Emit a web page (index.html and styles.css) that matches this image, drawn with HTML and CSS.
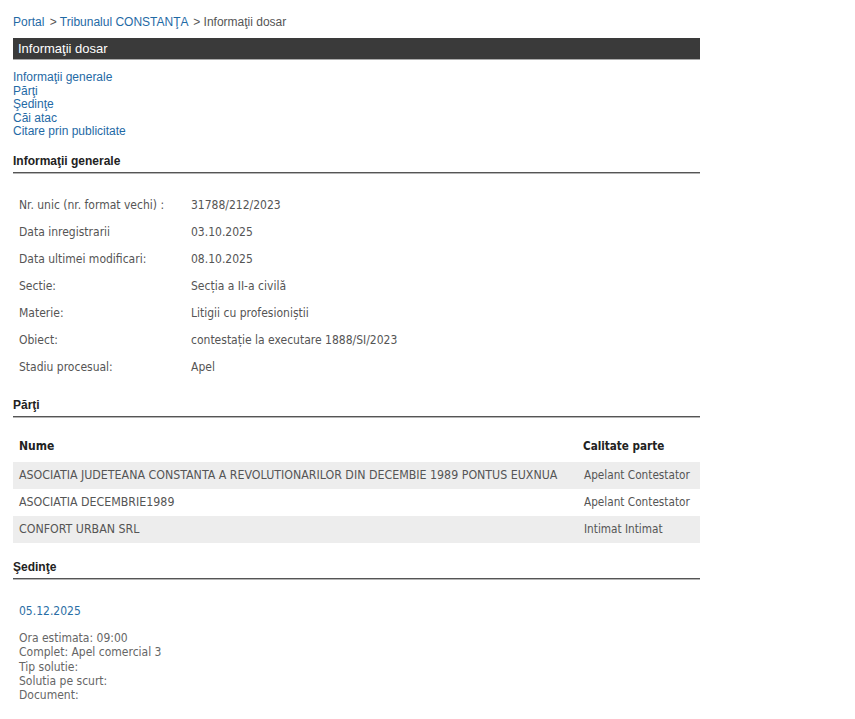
FILE: index.html
```html
<!DOCTYPE html>
<html lang="ro">
<head>
<meta charset="utf-8">
<title>Informaţii dosar</title>
<link rel="stylesheet" href="styles.css">
</head>
<body>
<div class="page">
  <div class="breadcrumb">
    <a href="#">Portal</a> <span class="sep">&gt;</span> <a href="#">Tribunalul CONSTANŢA</a> <span class="sep">&gt; Informaţii dosar</span>
  </div>
  <div class="titlebar">Informaţii dosar</div>
  <ul class="toc">
    <li><a href="#">Informaţii generale</a></li>
    <li><a href="#">Părţi</a></li>
    <li><a href="#">Şedinţe</a></li>
    <li><a href="#">Căi atac</a></li>
    <li><a href="#">Citare prin publicitate</a></li>
  </ul>

  <h2 class="section">Informaţii generale</h2>
  <div class="info">
    <div class="info-row"><span class="lbl">Nr. unic (nr. format vechi) :</span><span class="val">31788/212/2023</span></div>
    <div class="info-row"><span class="lbl">Data inregistrarii</span><span class="val">03.10.2025</span></div>
    <div class="info-row"><span class="lbl">Data ultimei modificari:</span><span class="val">08.10.2025</span></div>
    <div class="info-row"><span class="lbl">Sectie:</span><span class="val">Secția a II-a civilă</span></div>
    <div class="info-row"><span class="lbl">Materie:</span><span class="val">Litigii cu profesioniștii</span></div>
    <div class="info-row"><span class="lbl">Obiect:</span><span class="val">contestație la executare 1888/SI/2023</span></div>
    <div class="info-row"><span class="lbl">Stadiu procesual:</span><span class="val">Apel</span></div>
  </div>

  <h2 class="section">Părţi</h2>
  <table class="parti">
    <thead>
      <tr><th>Nume</th><th class="col2">Calitate parte</th></tr>
    </thead>
    <tbody>
      <tr class="odd"><td>ASOCIATIA JUDETEANA CONSTANTA A REVOLUTIONARILOR DIN DECEMBIE 1989 PONTUS EUXNUA</td><td class="col2">Apelant Contestator</td></tr>
      <tr><td>ASOCIATIA DECEMBRIE1989</td><td class="col2">Apelant Contestator</td></tr>
      <tr class="odd"><td>CONFORT URBAN SRL</td><td class="col2">Intimat Intimat</td></tr>
    </tbody>
  </table>

  <h2 class="section">Şedinţe</h2>
  <div class="sedinta">
    <div class="date">05.12.2025</div>
    <div class="details">
      <div>Ora estimata: 09:00</div>
      <div>Complet: Apel comercial 3</div>
      <div>Tip solutie:</div>
      <div>Solutia pe scurt:</div>
      <div>Document:</div>
    </div>
  </div>
</div>
</body>
</html>
```
FILE: styles.css
```css
html, body {
  margin: 0;
  padding: 0;
  background: #fff;
}
.page {
  width: 687px;
  padding: 14px 0 0 13px;
  font-family: "Liberation Sans", Arial, sans-serif;
  font-size: 12px;
  color: #555;
}
a {
  color: #1f6aa5;
  text-decoration: none;
}
.breadcrumb {
  font-size: 12px;
  line-height: 16px;
  color: #555;
}
.breadcrumb .sep {
  margin-left: 2px;
}
.titlebar {
  margin-top: 8px;
  height: 22px;
  line-height: 21px;
  background: #3a3a3a;
  border-bottom: 1px solid #aaa;
  box-sizing: border-box;
  color: #fff;
  font-size: 13px;
  padding-left: 5px;
}
.toc {
  list-style: none;
  margin: 11px 0 0;
  padding: 0;
  line-height: 13.6px;
  font-size: 12px;
}
.section {
  margin: 0;
  font-family: "Liberation Sans", Arial, sans-serif;
  font-size: 12px;
  font-weight: bold;
  color: #222;
  border-bottom: 1px solid #555;
  box-shadow: 0 1px 0 #b5b5b5;
  padding-bottom: 4px;
  line-height: 14px;
}
.toc + .section { margin-top: 15px; }
.info {
  padding: 19px 0 17px 6px;
  font-family: "DejaVu Sans Condensed", "DejaVu Sans", sans-serif;
  font-size: 12px;
  color: #555;
}
.info-row {
  display: flex;
  height: 27px;
  line-height: 27px;
}
.info-row .lbl { width: 172px; }
.parti {
  width: 100%;
  table-layout: fixed;
  border-collapse: collapse;
  margin: 14px 0 17px;
  font-family: "DejaVu Sans Condensed", "DejaVu Sans", sans-serif;
  font-size: 12.3px;
  color: #555;
}
.parti th {
  text-align: left;
  color: #222;
  font-weight: bold;
  font-size: 12px;
  height: 31px;
  padding: 0 6px;
}
.parti td {
  height: 27px;
  padding: 0 6px;
}
.parti .col2 {
  padding-left: 4px;
  padding-right: 0;
  white-space: nowrap;
}
.parti td.col2 { font-size: 11.7px; }
.parti th.col2 { width: 117px; padding-left: 3px; font-size: 11.6px; }
.parti tr.odd td { background: #ededed; }
.sedinta {
  padding: 24px 0 0 6px;
  font-family: "DejaVu Sans Condensed", "DejaVu Sans", sans-serif;
  font-size: 12px;
  color: #666;
}
.sedinta .date {
  color: #2a6ea5;
  font-size: 12px;
  line-height: 16px;
}
.sedinta .details {
  margin-top: 12px;
  line-height: 14.3px;
}
```
